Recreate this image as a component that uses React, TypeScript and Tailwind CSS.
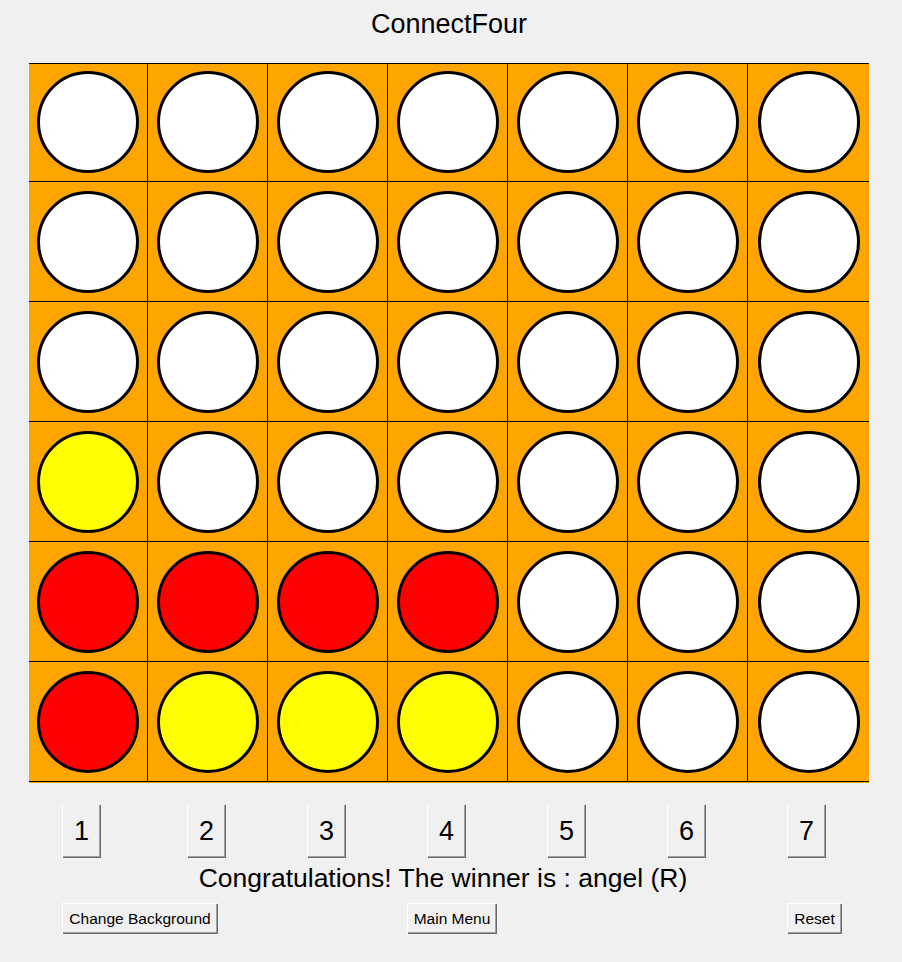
import React from 'react';

type Disc = 'W' | 'R' | 'Y';

const BOARD: Disc[][] = [
  ['W', 'W', 'W', 'W', 'W', 'W', 'W'],
  ['W', 'W', 'W', 'W', 'W', 'W', 'W'],
  ['W', 'W', 'W', 'W', 'W', 'W', 'W'],
  ['Y', 'W', 'W', 'W', 'W', 'W', 'W'],
  ['R', 'R', 'R', 'R', 'W', 'W', 'W'],
  ['R', 'Y', 'Y', 'Y', 'W', 'W', 'W'],
];

const DISC_BG: Record<Disc, string> = {
  W: 'bg-white',
  R: 'bg-[#ff0000]',
  Y: 'bg-[#ffff00]',
};

const COL_W = ['w-[119px]', 'w-[120px]', 'w-[120px]', 'w-[120px]', 'w-[120px]', 'w-[120px]', 'w-[121px]'];

const colButton =
  'w-[39px] h-[53px] bg-[#f0f0f0] text-[27px] leading-none text-black flex items-center justify-center shadow-[inset_1px_0_0_#ffffff,inset_-1px_-1px_0_#696969,inset_-2px_-2px_0_#a0a0a0]';

const smallButton =
  'h-[31px] bg-[#f0f0f0] text-[15.5px] leading-none text-black flex items-center justify-center shadow-[inset_1px_1px_0_#ffffff,inset_-1px_-1px_0_#696969,inset_-2px_-2px_0_#a0a0a0]';

export default function App() {
  return (
    <div className="w-[902px] h-[962px] bg-[#f0f0f0] text-black font-['Liberation_Sans',Arial,sans-serif] overflow-hidden">
      <div className="h-[63px] pt-[11px] pr-[4px] text-center text-[27px] leading-[27px]">ConnectFour</div>

      <div className="ml-[29px] w-[840px] h-[720px] bg-[#ffa500] border-t border-black pb-[1px] flex flex-col">
        {BOARD.map((row, r) => (
          <div key={r} className="flex">
            {row.map((d, c) => (
              <div
                key={c}
                className={`${COL_W[c]} ${r === 0 ? 'h-[118px] pb-[2px]' : 'h-[120px]'} border-b border-black ${
                  c < 6 ? 'border-r' : ''
                } flex items-center justify-center`}
              >
                <div className={`w-[102px] h-[102px] rounded-full border-[3px] border-black ${DISC_BG[d]}`} />
              </div>
            ))}
          </div>
        ))}
      </div>

      <div className="mt-[22px] ml-[62px] grid grid-cols-[125px_repeat(6,120px)]">
        {[1, 2, 3, 4, 5, 6, 7].map((n) => (
          <div key={n}>
            <button className={colButton}>{n}</button>
          </div>
        ))}
      </div>

      <div className="mt-[7px] w-[886px] h-[27px] text-center text-[26.5px] leading-[27px]">
        Congratulations! The winner is : angel (R)
      </div>

      <div className="mt-[11px] ml-[62px] w-[780px] grid grid-cols-3">
        <button className={`${smallButton} w-[156px] justify-self-start`}>Change Background</button>
        <button className={`${smallButton} w-[90px] justify-self-center`}>Main Menu</button>
        <button className={`${smallButton} w-[55px] justify-self-end`}>Reset</button>
      </div>
    </div>
  );
}
